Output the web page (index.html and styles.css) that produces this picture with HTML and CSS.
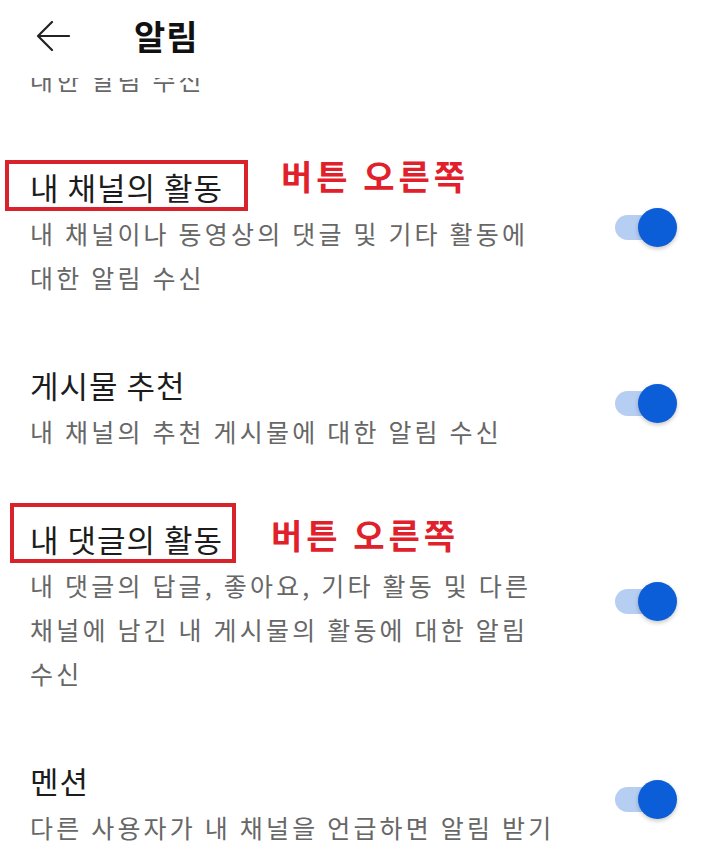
FILE: index.html
```html
<html>
    <head>
        <meta charset="utf-8">
        <link rel="stylesheet" href="styles.css">
    </head>
    <body>
        <div class="screen">
            <div class="topbar">
                <svg class="back" width="34" height="32" viewBox="0 0 34 32">
                    <path d="M33 15 H2 M16 1 L2 15 L16 29" fill="none" stroke="#222" stroke-width="2.2" stroke-linecap="round" stroke-linejoin="round"/>
                </svg>
                <h1>알림</h1>
            </div>
            <div class="feed">
                <p class="desc tail">대한 알림 수신</p>

                <div class="item">
                    <div class="text">
                        <div class="title">내 채널의 활동
                            <span class="mark mark-a"></span>
                            <span class="note note-a">버튼 오른쪽</span>
                        </div>
                        <p class="desc">내 채널이나 동영상의 댓글 및 기타 활동에<br>대한 알림 수신</p>
                    </div>
                    <div class="switch"><span class="thumb"></span></div>
                </div>

                <div class="item">
                    <div class="text">
                        <div class="title">게시물 추천</div>
                        <p class="desc">내 채널의 추천 게시물에 대한 알림 수신</p>
                    </div>
                    <div class="switch"><span class="thumb"></span></div>
                </div>

                <div class="item">
                    <div class="text">
                        <div class="title">내 댓글의 활동
                            <span class="mark mark-b"></span>
                            <span class="note note-b">버튼 오른쪽</span>
                        </div>
                        <p class="desc">내 댓글의 답글, 좋아요, 기타 활동 및 다른<br>채널에 남긴 내 게시물의 활동에 대한 알림<br>수신</p>
                    </div>
                    <div class="switch"><span class="thumb"></span></div>
                </div>

                <div class="item">
                    <div class="text">
                        <div class="title">멘션</div>
                        <p class="desc">다른 사용자가 내 채널을 언급하면 알림 받기</p>
                    </div>
                    <div class="switch"><span class="thumb"></span></div>
                </div>
            </div>
        </div>
    </body>
</html>
```

FILE: styles.css
```css
body {margin: 0; background: #fff; font-family: "Noto Sans CJK KR", "Noto Sans", sans-serif; color: #1c1c1c;}
.screen {width: 720px; height: 860px; display: flex; flex-direction: column; overflow: hidden;}

/* top bar */
.topbar {height: 78px; padding: 0 0 6px 36px; box-sizing: border-box; display: flex; align-items: center; background: #fff; flex-shrink: 0;}
.back {display: block; margin-top: 2px;}
.topbar h1 {margin: 0 0 0 64px; font-size: 34px; font-weight: 700; line-height: 40px; letter-spacing: 1px; color: #111;}

/* settings list */
.feed {flex: 1; overflow: hidden;}
.tail {margin-top: -21px !important; padding-left: 30px;}

.item {display: flex; align-items: center; padding: 66px 43px 0 30px;}
.text {flex: 1;}
.title {position: relative; font-size: 31px; line-height: 40px; letter-spacing: 1px; color: #1c1c1c;}
.desc {margin: 4px 0 0; font-size: 25px; line-height: 44px; letter-spacing: 3.2px; color: #676767; white-space: nowrap;}

/* on/off switch */
.switch {
    position: relative;
    width: 62px;
    height: 39px;
    margin-bottom: 12px;
    flex-shrink: 0;
}
.switch::before {
    content: "";
    position: absolute;
    left: 0;
    top: 7px;
    width: 50px;
    height: 25px;
    border-radius: 13px;
    background: #b6cef2;
}
.thumb {
    position: absolute;
    right: 0;
    top: 0;
    width: 39px;
    height: 39px;
    border-radius: 50%;
    background: #0b5ed7;
    box-shadow: 0 2px 4px rgba(0, 0, 0, 0.22);
}

/* red markers drawn over the titles */
.mark {position: absolute; border: 4px solid #d8232c; box-sizing: border-box;}
.mark-a {left: -25px; top: -7px; width: 243px; height: 51px;}
.mark-b {left: -20px; top: -16px; width: 226px; height: 60px;}
.note {position: absolute; font-size: 34px; font-weight: 700; line-height: 40px; letter-spacing: 4px; color: #e0212b; white-space: nowrap;}
.note-a {left: 251px; top: -11px;}
.note-b {left: 241px; top: -4px;}
```
